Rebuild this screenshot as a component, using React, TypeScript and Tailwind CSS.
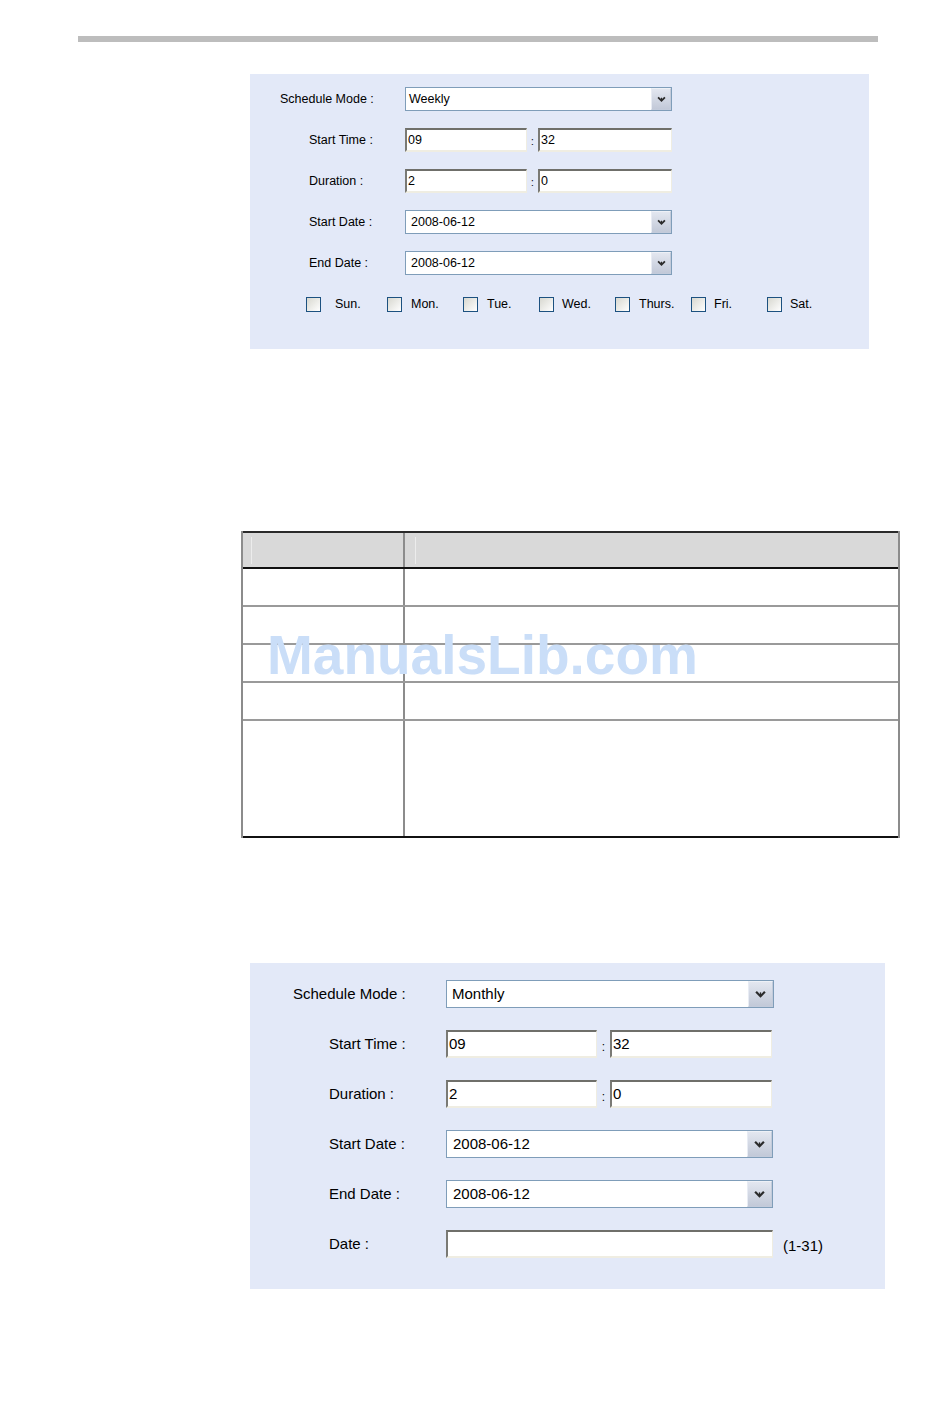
import React from "react";

const font = "font-['Liberation_Sans','Arial',sans-serif]";

function Chevron({ size }: { size: number }) {
  return (
    <svg width={size} height={Math.round(size * 0.7)} viewBox="0 0 10 7" fill="none">
      <polyline points="1,1.5 5,5.5 9,1.5" stroke="#2b2b2b" strokeWidth="2" strokeLinejoin="miter" />
      <line x1="5" y1="2" x2="5" y2="5.5" stroke="#2b2b2b" strokeWidth="1.2" />
    </svg>
  );
}

function Select({
  value,
  w,
  h,
  btn,
  textPad,
  textSize,
}: {
  value: string;
  w: string;
  h: string;
  btn: string;
  textPad: string;
  textSize: string;
}) {
  return (
    <div className={`${w} ${h} flex border border-[#7f9db9] bg-white box-border`}>
      <div className={`flex-1 flex items-center ${textPad} ${textSize} text-black`}>{value}</div>
      <div
        className={`${btn} h-full flex items-center justify-center border border-[#c3cbdb] border-l-[#e8ecf4] border-t-[#eef1f7] bg-gradient-to-b from-[#e3e7f0] to-[#c2c9d8] box-border`}
      >
        <Chevron size={btn === "w-[20px]" ? 9 : 11} />
      </div>
    </div>
  );
}

function TextInput({ value, w, h, textSize }: { value: string; w: string; h: string; textSize: string }) {
  return (
    <div
      className={`${w} ${h} flex items-center box-border bg-white border-t-2 border-l-2 border-b-2 border-r border-t-[#6f6f6a] border-l-[#7a7a75] border-b-[#efede2] border-r-[#efede2] pl-[1px] ${textSize} text-black`}
    >
      {value}
    </div>
  );
}

function Checkbox() {
  return (
    <div className="w-[15px] h-[15px] box-border border border-[#1c5180] bg-gradient-to-br from-[#d8d8d0] to-white" />
  );
}

// Day checkboxes: Sunday's cell is a little wider than the rest
const days: { label: string; gap: string; w: string }[] = [
  { label: "Sun.", gap: "ml-[14px]", w: "w-[81px]" },
  { label: "Mon.", gap: "ml-[9px]", w: "w-[76px]" },
  { label: "Tue.", gap: "ml-[9px]", w: "w-[76px]" },
  { label: "Wed.", gap: "ml-[8px]", w: "w-[76px]" },
  { label: "Thurs.", gap: "ml-[9px]", w: "w-[76px]" },
  { label: "Fri.", gap: "ml-[8px]", w: "w-[76px]" },
  { label: "Sat.", gap: "ml-[8px]", w: "w-[76px]" },
];

function WeeklyPanel() {
  const label = "text-[12.5px] text-black";
  return (
    <div className="ml-[250px] mt-[32px] w-[619px] h-[275px] bg-[#e3e9f8] pt-[13px] pl-[30px] flex flex-col gap-[17px]">
      <div className="flex items-center h-[24px]">
        <div className={`w-[125px] ${label}`}>Schedule Mode :</div>
        <Select value="Weekly" w="w-[267px]" h="h-[24px]" btn="w-[20px]" textPad="pl-[3px]" textSize="text-[12.5px]" />
      </div>
      <div className="flex items-center h-[24px]">
        <div className={`w-[125px] pl-[29px] ${label}`}>Start Time :</div>
        <TextInput value="09" w="w-[122px]" h="h-[24px]" textSize="text-[12.5px]" />
        <div className="w-[11px] text-[10px] text-center self-end pb-[3px]">:</div>
        <TextInput value="32" w="w-[134px]" h="h-[24px]" textSize="text-[12.5px]" />
      </div>
      <div className="flex items-center h-[24px]">
        <div className={`w-[125px] pl-[29px] ${label}`}>Duration :</div>
        <TextInput value="2" w="w-[122px]" h="h-[24px]" textSize="text-[12.5px]" />
        <div className="w-[11px] text-[10px] text-center self-end pb-[3px]">:</div>
        <TextInput value="0" w="w-[134px]" h="h-[24px]" textSize="text-[12.5px]" />
      </div>
      <div className="flex items-center h-[24px]">
        <div className={`w-[125px] pl-[29px] ${label}`}>Start Date :</div>
        <Select value="2008-06-12" w="w-[267px]" h="h-[24px]" btn="w-[20px]" textPad="pl-[5px]" textSize="text-[12.5px]" />
      </div>
      <div className="flex items-center h-[24px]">
        <div className={`w-[125px] pl-[29px] ${label}`}>End Date :</div>
        <Select value="2008-06-12" w="w-[267px]" h="h-[24px]" btn="w-[20px]" textPad="pl-[5px]" textSize="text-[12.5px]" />
      </div>
      <div className="flex items-center h-[24px] pl-[26px]">
        {days.map((d) => (
          <div key={d.label} className={`${d.w} flex items-center`}>
            <Checkbox />
            <span className={`${d.gap} ${label}`}>{d.label}</span>
          </div>
        ))}
      </div>
    </div>
  );
}

function ParamTable() {
  const rowH = ["h-[38px]", "h-[38px]", "h-[38px]", "h-[38px]", "h-[117px]"];
  return (
    <div className="relative ml-[241px] mt-[182px] w-[659px] border-x-2 border-[#8c8c8c] box-border">
      {/* header */}
      <div className="flex h-[38px] border-t-2 border-b-2 border-t-[#2a2a2a] border-b-[#111] bg-[#d9d9d9] box-border">
        <div className="w-[162px] h-full border-r-2 border-[#8c8c8c] flex items-center pl-[8px]">
          <div className="w-[1px] h-[27px] bg-[#ececec]" />
        </div>
        <div className="flex-1 h-full flex items-center pl-[10px]">
          <div className="w-[1px] h-[27px] bg-[#ececec]" />
        </div>
      </div>
      {rowH.map((h, i) => (
        <div
          key={i}
          className={`flex ${h} border-b-2 box-border ${i === rowH.length - 1 ? "border-[#111]" : "border-[#9a9a9a]"} bg-white`}
        >
          <div className="w-[162px] h-full border-r-2 border-[#8c8c8c]" />
          <div className="flex-1 h-full" />
        </div>
      ))}
      <div className="absolute left-[24px] top-[97px] text-[55px] leading-none font-bold text-[#cadef8] font-['Liberation_Sans','Arial',sans-serif] whitespace-nowrap pointer-events-none">
        ManualsLib.com
      </div>
    </div>
  );
}

function MonthlyPanel() {
  const label = "text-[15px] text-black";
  return (
    <div className="ml-[250px] mt-[125px] w-[635px] h-[326px] bg-[#e3e9f8] pt-[17px] pl-[43px] flex flex-col gap-[22px]">
      <div className="flex items-center h-[28px]">
        <div className={`w-[153px] ${label}`}>Schedule Mode :</div>
        <Select value="Monthly" w="w-[328px]" h="h-[28px]" btn="w-[25px]" textPad="pl-[5px]" textSize="text-[15px]" />
      </div>
      <div className="flex items-center h-[28px]">
        <div className={`w-[153px] pl-[36px] ${label}`}>Start Time :</div>
        <TextInput value="09" w="w-[151px]" h="h-[28px]" textSize="text-[15px]" />
        <div className="w-[13px] text-[12px] text-center self-end pb-[2px]">:</div>
        <TextInput value="32" w="w-[162px]" h="h-[28px]" textSize="text-[15px]" />
      </div>
      <div className="flex items-center h-[28px]">
        <div className={`w-[153px] pl-[36px] ${label}`}>Duration :</div>
        <TextInput value="2" w="w-[151px]" h="h-[28px]" textSize="text-[15px]" />
        <div className="w-[13px] text-[12px] text-center self-end pb-[2px]">:</div>
        <TextInput value="0" w="w-[162px]" h="h-[28px]" textSize="text-[15px]" />
      </div>
      <div className="flex items-center h-[28px]">
        <div className={`w-[153px] pl-[36px] ${label}`}>Start Date :</div>
        <Select value="2008-06-12" w="w-[327px]" h="h-[28px]" btn="w-[25px]" textPad="pl-[6px]" textSize="text-[15px]" />
      </div>
      <div className="flex items-center h-[28px]">
        <div className={`w-[153px] pl-[36px] ${label}`}>End Date :</div>
        <Select value="2008-06-12" w="w-[327px]" h="h-[28px]" btn="w-[25px]" textPad="pl-[6px]" textSize="text-[15px]" />
      </div>
      <div className="flex items-center h-[28px]">
        <div className={`w-[153px] pl-[36px] ${label}`}>Date :</div>
        <TextInput value="" w="w-[327px]" h="h-[28px]" textSize="text-[15px]" />
        <span className={`ml-[10px] mt-[5px] ${label}`}>(1-31)</span>
      </div>
    </div>
  );
}

export default function App() {
  return (
    <div className={`w-[950px] min-h-[1420px] bg-white ${font} pt-[36px]`}>
      <div className="ml-[78px] w-[800px] h-[6px] bg-[#bdbdbd]" />
      <WeeklyPanel />
      <ParamTable />
      <MonthlyPanel />
    </div>
  );
}
